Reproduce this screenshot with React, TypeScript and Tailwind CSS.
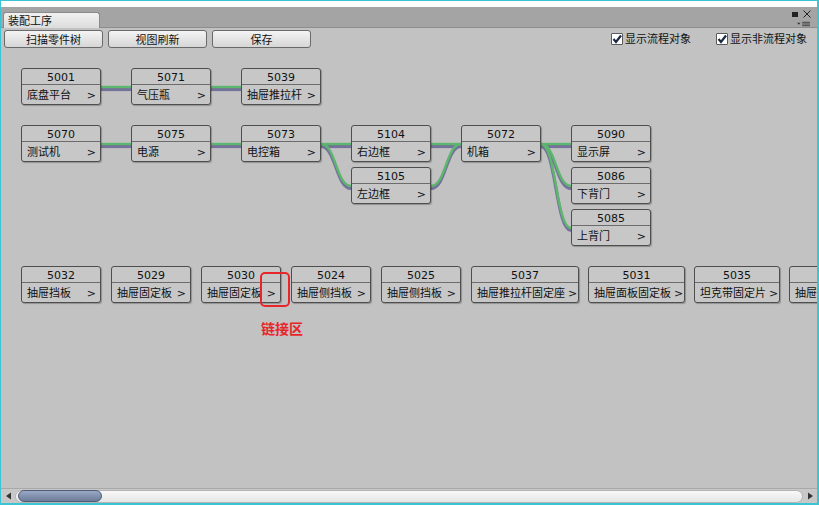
import React from "react";

type Node = { id: string; label: string; x: number; y: number; w?: number };

// canvas coordinates (canvas starts at x=1, y=50 of the window)
const nodes: Node[] = [
  { id: "5001", label: "底盘平台", x: 20, y: 19 },
  { id: "5071", label: "气压瓶", x: 130, y: 19 },
  { id: "5039", label: "抽屉推拉杆", x: 240, y: 19 },
  { id: "5070", label: "测试机", x: 20, y: 76 },
  { id: "5075", label: "电源", x: 130, y: 76 },
  { id: "5073", label: "电控箱", x: 240, y: 76 },
  { id: "5104", label: "右边框", x: 350, y: 76 },
  { id: "5105", label: "左边框", x: 350, y: 118 },
  { id: "5072", label: "机箱", x: 460, y: 76 },
  { id: "5090", label: "显示屏", x: 570, y: 76 },
  { id: "5086", label: "下背门", x: 570, y: 118 },
  { id: "5085", label: "上背门", x: 570, y: 160 },
  { id: "5032", label: "抽屉挡板", x: 20, y: 217 },
  { id: "5029", label: "抽屉固定板", x: 110, y: 217 },
  { id: "5030", label: "抽屉固定板", x: 200, y: 217 },
  { id: "5024", label: "抽屉侧挡板", x: 290, y: 217 },
  { id: "5025", label: "抽屉侧挡板", x: 380, y: 217 },
  { id: "5037", label: "抽屉推拉杆固定座", x: 470, y: 217, w: 108 },
  { id: "5031", label: "抽屉面板固定板", x: 587, y: 217, w: 97 },
  { id: "5035", label: "坦克带固定片", x: 693, y: 217, w: 86 },
  { id: "5033", label: "抽屉面板", x: 788, y: 217, w: 90 },
];

const edges: [string, string][] = [
  ["5001", "5071"],
  ["5071", "5039"],
  ["5070", "5075"],
  ["5075", "5073"],
  ["5073", "5104"],
  ["5073", "5105"],
  ["5104", "5072"],
  ["5105", "5072"],
  ["5072", "5090"],
  ["5072", "5086"],
  ["5072", "5085"],
];

const byId = Object.fromEntries(nodes.map((n) => [n.id, n]));

function curve(a: Node, b: Node, dy: number) {
  const x1 = a.x + (a.w ?? 80);
  const y1 = a.y + 19 + dy;
  const x2 = b.x;
  const y2 = b.y + 19 + dy;
  const t = (x2 - x1) / 2;
  return `M${x1} ${y1} C${x1 + t} ${y1} ${x2 - t} ${y2} ${x2} ${y2}`;
}

function Check() {
  return (
    <span className="w-[12px] h-[12px] bg-white border border-[#5a5a5a] rounded-[1px] flex items-center justify-center">
      <svg width="10" height="10" viewBox="0 0 10 10">
        <path d="M1.5 5 L4 8 L9 1.5" fill="none" stroke="#1b2a44" strokeWidth="2.2" />
      </svg>
    </span>
  );
}

function NodeBox({ n }: { n: Node }) {
  return (
    <div
      className="absolute bg-[#c7c7c7] border border-[#4e4e4e] rounded-[3px] shadow-[1px_1px_1px_rgba(0,0,0,0.25)] text-[#111]"
      style={{ left: n.x, top: n.y, width: n.w ?? 80, height: 37 }}
    >
      <div className="h-[16px] pt-[1px] leading-[15px] text-center text-[11px] border-b border-[#6c6c6c]">{n.id}</div>
      <div className="h-[19px] pt-[3px] flex items-center justify-between gap-[3px] pl-[5px] pr-[4px] text-[11px] leading-[14px] whitespace-nowrap overflow-hidden">
        <span>{n.label}</span>
        <span>&gt;</span>
      </div>
    </div>
  );
}

export default function App() {
  return (
    <div className="w-[819px] h-[505px] flex flex-col border-l border-t border-r-2 border-b-2 border-[#3cc4d4] bg-white overflow-hidden font-['DejaVu_Sans','Noto_Sans_CJK_SC',sans-serif]">
      <div className="h-[6px] bg-white shrink-0" />

      {/* tab bar */}
      <div className="h-[21px] shrink-0 bg-[#a4a4a4] border-b border-[#8c8c8c] flex justify-between">
        <div className="flex items-end pl-[2px]">
          <div className="w-[97px] h-[16px] -mb-px bg-gradient-to-b from-[#f2f2f2] to-[#dcdcdc] border border-b-0 border-[#8a8a8a] rounded-t-[3px] text-[11px] leading-[15px] pl-[4px] text-[#111] font-['Noto_Sans_CJK_SC',sans-serif]">
            装配工序
          </div>
        </div>
        <div className="flex flex-col items-end pr-[6px] pt-[3px] gap-[3px]">
          <div className="flex items-center gap-[5px]">
            <span className="w-[6px] h-[5px] bg-[#222]" />
            <svg width="8" height="8" viewBox="0 0 8 8">
              <path d="M0.5 0.5 L7.5 7.5 M7.5 0.5 L0.5 7.5" stroke="#222" strokeWidth="1" />
            </svg>
          </div>
          <svg width="15" height="7" viewBox="0 0 15 7">
            <path d="M0 2 L4 2 L2 4.5 Z" fill="#333" />
            <path d="M6 1.5 H15 M6 3.5 H15 M6 5.5 H15" stroke="#333" strokeWidth="1" />
          </svg>
        </div>
      </div>

      {/* toolbar */}
      <div className="h-[21px] shrink-0 bg-[#c2c2c2] flex items-center pl-[3px] pr-[10px] text-[11px] text-[#111] font-['Noto_Sans_CJK_SC',sans-serif]">
        {["扫描零件树", "视图刷新", "保存"].map((b) => (
          <button
            key={b}
            className="w-[99px] h-[18px] mr-[5px] bg-gradient-to-b from-[#f4f4f4] to-[#d6d6d6] border border-[#6a6a6a] rounded-[3px] leading-[16px] text-center"
          >
            {b}
          </button>
        ))}
        <div className="flex-1" />
        <label className="flex items-center gap-[2px] mr-[25px]">
          <Check />
          <span>显示流程对象</span>
        </label>
        <label className="flex items-center gap-[2px]">
          <Check />
          <span>显示非流程对象</span>
        </label>
      </div>

      {/* canvas */}
      <div className="relative flex-1 bg-[#c2c2c2] overflow-hidden">
        <svg className="absolute inset-0" width="816" height="438">
          {edges.map(([a, b]) => (
            <path key={a + b + "s"} d={curve(byId[a], byId[b], 2.5)} fill="none" stroke="#74729a" strokeWidth="3.2" />
          ))}
          {edges.map(([a, b]) => (
            <path key={a + b} d={curve(byId[a], byId[b], 0)} fill="none" stroke="#5db66d" strokeWidth="2.4" />
          ))}
        </svg>
        {nodes.map((n) => (
          <NodeBox key={n.id} n={n} />
        ))}
        <div className="absolute left-[259px] top-[223px] w-[30px] h-[35px] border-2 border-[#e8262a] rounded-[5px]" />
        <div className="absolute left-[260px] top-[269px] text-[14px] font-bold text-[#e8262a] font-['Noto_Sans_CJK_SC',sans-serif]">
          链接区
        </div>
      </div>

      {/* scrollbar */}
      <div className="h-[15px] shrink-0 bg-[#c8c8c8] border-t border-[#a8a8a8] flex items-center pl-[4px] pr-[3px]">
        <svg width="8" height="8" viewBox="0 0 8 8" className="mr-[2px]">
          <path d="M1 4 L6 0.5 V7.5 Z" fill="#333" />
        </svg>
        <div className="flex-1 h-[13px] rounded-full border border-[#b4b4b4] bg-gradient-to-b from-[#f8f8f8] to-[#e6e6e6] flex items-center pl-[2px]">
          <div className="w-[84px] h-[12px] rounded-full border border-[#4e5c78] bg-gradient-to-b from-[#9aa9c4] to-[#6b7b99]" />
        </div>
        <svg width="8" height="8" viewBox="0 0 8 8" className="ml-[3px]">
          <path d="M7 4 L2 0.5 V7.5 Z" fill="#333" />
        </svg>
      </div>
    </div>
  );
}
